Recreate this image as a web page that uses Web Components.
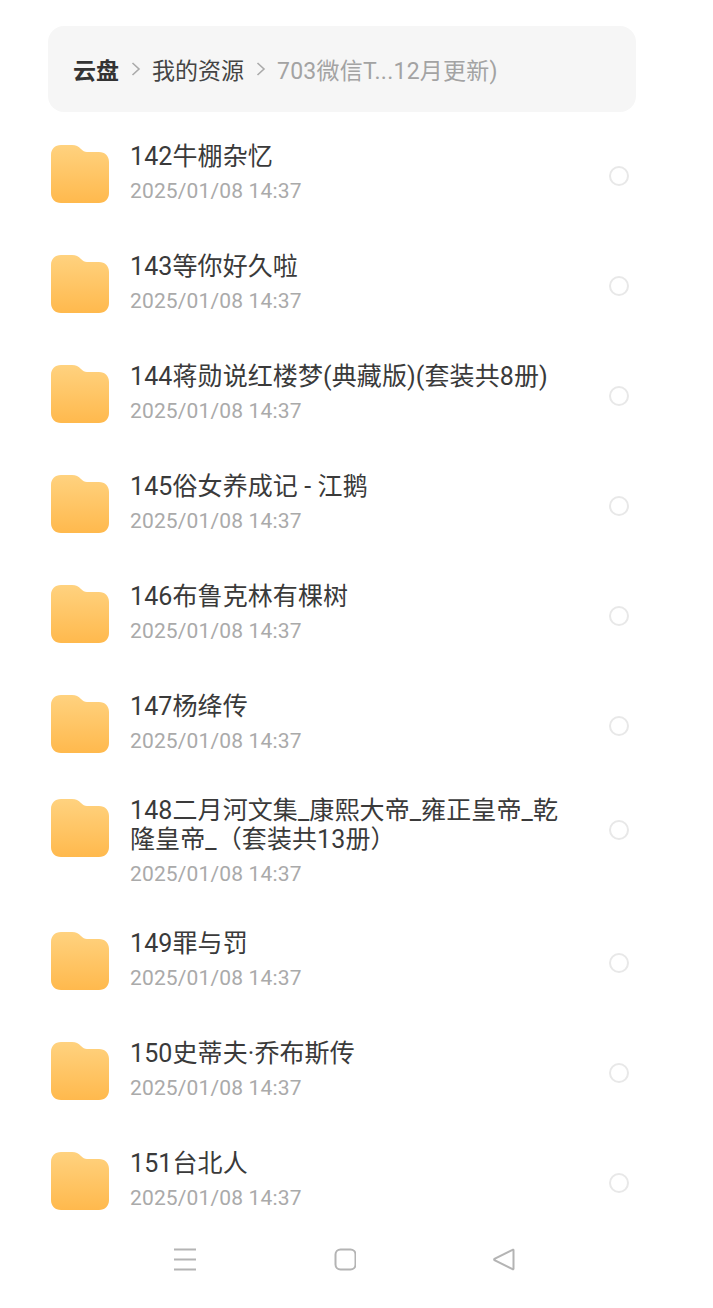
<!DOCTYPE html>
<html lang="zh">
<head>
<meta charset="utf-8">
<title>云盘</title>
<style>
html, body {
	margin: 0;
	background: #fff;
}
body {
	font-family: Roboto, "Noto Sans CJK SC", sans-serif;
}
</style>
</head>
<body>
<drive-page>
	<drive-breadcrumb>
		<b>云盘</b>
		<span>我的资源</span>
		<span class="last">703微信T...12月更新)</span>
	</drive-breadcrumb>
	<drive-row name="142牛棚杂忆"></drive-row>
	<drive-row name="143等你好久啦"></drive-row>
	<drive-row name="144蒋勋说红楼梦(典藏版)(套装共8册)"></drive-row>
	<drive-row name="145俗女养成记 - 江鹅"></drive-row>
	<drive-row name="146布鲁克林有棵树"></drive-row>
	<drive-row name="147杨绛传"></drive-row>
	<drive-row name="148二月河文集_康熙大帝_雍正皇帝_乾隆皇帝_（套装共13册）"></drive-row>
	<drive-row name="149罪与罚"></drive-row>
	<drive-row name="150史蒂夫·乔布斯传"></drive-row>
	<drive-row name="151台北人"></drive-row>
	<drive-navbar></drive-navbar>
</drive-page>
<script>
(function() {
	class DrivePage extends HTMLElement {
		constructor() {
			super();
			this.attachShadow({mode: "open"}).innerHTML = `
				<style>
				:host {
					display: block;
					width: 713px;
					height: 1308px;
					padding-top: 26px;
					box-sizing: border-box;
					overflow: hidden;
					background: #fff;
				}
				</style>
				<slot></slot>
			`;
		}
	}

	class DriveBreadcrumb extends HTMLElement {
		constructor() {
			super();
			let root = this.attachShadow({mode: "open"});
			root.innerHTML = `
				<style>
				:host {
					display: block;
					margin: 0 77px 9px 48px;
					height: 86px;
					border-radius: 16px;
					background: #f6f6f6;
				}
				nav {
					display: flex;
					align-items: center;
					height: 100%;
					padding-left: 25px;
					font-size: 23px;
					color: #444;
				}
				svg {
					width: 10px;
					height: 16px;
					margin: 0 11px 0 12px;
					flex: none;
				}
				::slotted(b) {
					color: #333;
					font-weight: 700;
				}
				::slotted(.last) {
					color: #a3a3a3;
					letter-spacing: 0.25px;
				}
				</style>
				<nav></nav>
			`;
			let nav = root.querySelector("nav");
			Array.from(this.children).forEach((el, i) => {
				let name = "part" + i;
				el.setAttribute("slot", name);
				if (i > 0) {
					nav.insertAdjacentHTML("beforeend", `<svg viewBox="0 0 10 16"><path d="M1.5 2 8 8 1.5 14" fill="none" stroke="#aaa" stroke-width="1.6"/></svg>`);
				}
				nav.insertAdjacentHTML("beforeend", `<slot name="${name}"></slot>`);
			});
		}
	}

	let rowTemplate = document.createElement("template");
	rowTemplate.innerHTML = `
		<style>
		:host {
			display: flex;
			align-items: center;
			box-sizing: border-box;
			min-height: 110px;
			padding: 14.5px 84px 14.5px 51px;
		}
		.inner {
			display: flex;
			align-items: flex-start;
			width: 100%;
		}
		svg {
			flex: none;
			width: 58px;
			height: 58px;
			margin-top: 3px;
		}
		.text {
			flex: 1;
			margin: 0 46px 0 21px;
			padding-bottom: 7px;
			min-width: 0;
		}
		.name {
			font-size: 25px;
			line-height: 29px;
			letter-spacing: 0.1px;
			color: #3a3a3a;
		}
		.date {
			margin-top: 8px;
			font-size: 21px;
			line-height: 25px;
			letter-spacing: 0.15px;
			color: #aaa;
		}
		.radio {
			flex: none;
			box-sizing: border-box;
			width: 20px;
			height: 20px;
			margin-top: 24.5px;
			border: 2.5px solid #e8e8e8;
			border-radius: 50%;
		}
		</style>
		<div class="inner">
			<svg viewBox="0 0 58 58">
				<defs>
					<linearGradient id="fill" x1="0" y1="0" x2="0" y2="1">
						<stop offset="0" stop-color="#ffd27f"/>
						<stop offset="1" stop-color="#ffb94d"/>
					</linearGradient>
				</defs>
				<path d="M10 0H21C25 0 27.500 1.500 30 4C32 6 33.500 7 36 7H48C54 7 58 11 58 17V48C58 54 54 58 48 58H10C4 58 0 54 0 48V10C0 4 4 0 10 0Z" fill="url(#fill)"/>
			</svg>
			<div class="text">
				<div class="name"></div>
				<div class="date"></div>
			</div>
			<div class="radio"></div>
		</div>
	`;

	class DriveRow extends HTMLElement {
		constructor() {
			super();
			this._shadowRoot = this.attachShadow({mode: "open"});
			this._shadowRoot.appendChild(rowTemplate.content.cloneNode(true));
		}

		connectedCallback() {
			this._shadowRoot.querySelector(".name").textContent = this.getAttribute("name");
			this._shadowRoot.querySelector(".date").textContent = this.getAttribute("date") || "2025/01/08 14:37";
		}
	}

	class DriveNavbar extends HTMLElement {
		constructor() {
			super();
			this.attachShadow({mode: "open"}).innerHTML = `
				<style>
				:host {
					display: flex;
					gap: 137.5px;
					padding: 10px 0 0 174px;
				}
				svg {
					width: 22px;
					height: 24px;
					fill: none;
					stroke: #b4b4b4;
					stroke-width: 2;
				}
				</style>
				<svg viewBox="0 0 22 24"><path d="M0 1.500H22M0 11.500H22M0 21.500H22"/></svg>
				<svg viewBox="0 0 22 24"><rect x="1.500" y="1.500" width="20" height="20" rx="5"/></svg>
				<svg viewBox="0 0 22 24"><path d="M19.500 1.800 1.500 10.800C1 11.200 1 11.800 1.500 12.200L19.500 21.200C20 21.500 20.500 21.200 20.500 20.700V2.300C20.500 1.800 20 1.500 19.500 1.800Z"/></svg>
			`;
		}
	}

	customElements.define("drive-page", DrivePage);
	customElements.define("drive-breadcrumb", DriveBreadcrumb);
	customElements.define("drive-row", DriveRow);
	customElements.define("drive-navbar", DriveNavbar);
})();
</script>
</body>
</html>
